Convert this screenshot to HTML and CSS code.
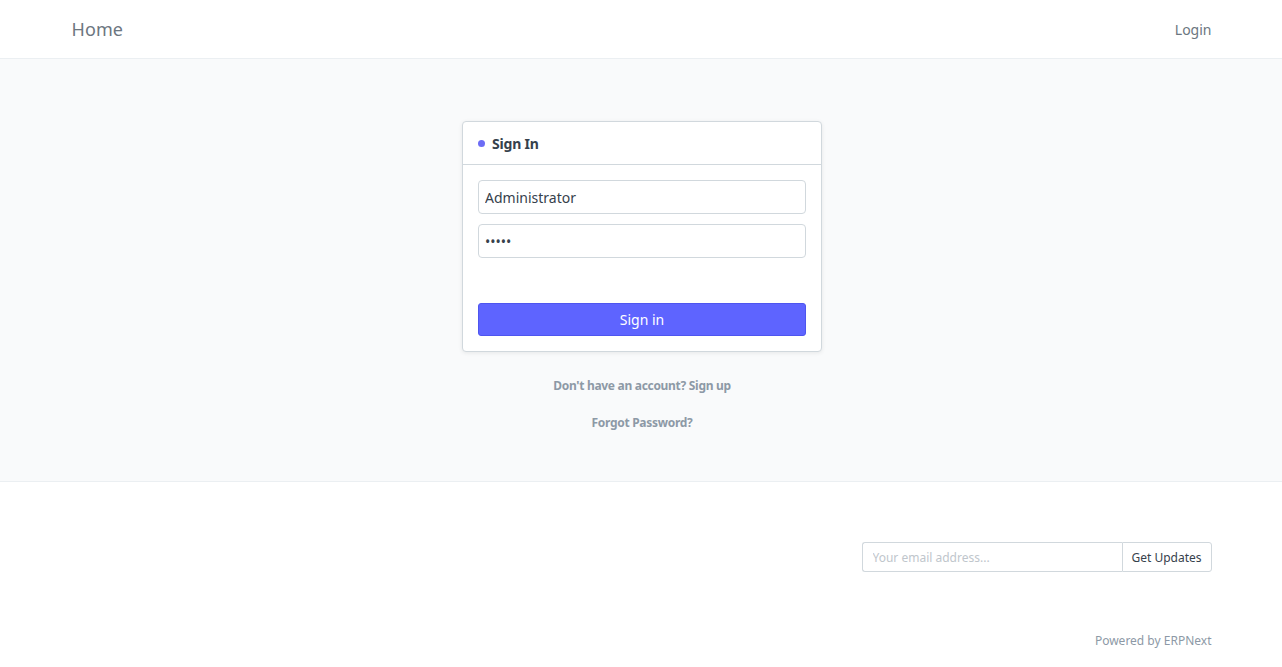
FILE: index.html
```html
<!DOCTYPE html>
<html lang="en">
<head>
    <meta charset="UTF-8">
    <title>Login</title>
    <link rel="stylesheet" href="styles.css">
</head>
<body>
    <nav class="navbar">
        <div class="container nav-inner">
            <a href="#" class="brand">Home</a>
            <a href="#" class="nav-link">Login</a>
        </div>
    </nav>

    <main class="page">
        <div class="login-card">
            <div class="card-head">
                <span class="dot"></span>
                <span class="card-title">Sign In</span>
            </div>
            <div class="card-body">
                <input type="text" class="field" value="Administrator">
                <input type="password" class="field" value="admin">
                <button class="btn-primary">Sign in</button>
            </div>
        </div>
        <p class="muted-link"><a href="#">Don't have an account? Sign up</a></p>
        <p class="muted-link"><a href="#">Forgot Password?</a></p>
    </main>

    <footer class="footer">
        <div class="container">
            <div class="subscribe">
                <input type="text" class="sub-input" placeholder="Your email address...">
                <button class="sub-btn">Get Updates</button>
            </div>
            <div class="powered">Powered by <a href="#">ERPNext</a></div>
        </div>
    </footer>
</body>
</html>
```

FILE: styles.css
```css
body {
    margin: 0;
    font-family: 'Noto Sans', 'Open Sans', sans-serif;
    color: #36414c;
    background: #fff;
}
a {
    text-decoration: none;
    color: inherit;
}
.container {
    width: 1140px;
    margin: 0 auto;
    padding-left: 1px;
}
.navbar {
    height: 58px;
    border-bottom: 1px solid #ebeff2;
}
.nav-inner {
    height: 58px;
    display: flex;
    justify-content: space-between;
    align-items: center;
}
.brand {
    font-size: 18px;
    color: #6c7680;
    letter-spacing: 0.1px;
}
.nav-link {
    font-size: 14px;
    color: #6c7680;
}
.page {
    background: #f9fafb;
    border-bottom: 1px solid #ebeff2;
    padding: 62px 0 50px 2px;
    display: flex;
    flex-direction: column;
    align-items: center;
}
.login-card {
    width: 358px;
    background: #fff;
    border: 1px solid #d1d8dd;
    border-radius: 4px;
    box-shadow: 0 1px 4px rgba(0, 0, 0, 0.08);
}
.card-head {
    height: 42px;
    border-bottom: 1px solid #d1d8dd;
    display: flex;
    align-items: center;
    padding: 0 15px;
}
.dot {
    width: 7px;
    height: 7px;
    border-radius: 50%;
    background: #6c6cf5;
    margin-right: 7px;
}
.card-title {
    font-size: 14px;
    font-weight: bold;
    color: #36414c;
    letter-spacing: -0.2px;
}
.card-body {
    padding: 15px;
    display: flex;
    flex-direction: column;
}
.field {
    height: 34px;
    box-sizing: border-box;
    border: 1px solid #d1d8dd;
    border-radius: 4px;
    padding: 0 6px;
    font-family: inherit;
    font-size: 14px;
    color: #36414c;
    margin-bottom: 10px;
}
.btn-primary {
    margin-top: 35px;
    height: 33px;
    border: 1px solid #4e55ef;
    border-radius: 3px;
    background: #5e64ff;
    color: #fff;
    font-family: inherit;
    font-size: 14px;
}
.muted-link {
    margin: 25px 0 0;
    font-size: 12px;
    font-weight: bold;
    color: #8d99a6;
    letter-spacing: -0.3px;
}
.muted-link + .muted-link {
    margin-top: 20px;
}
.footer {
    padding: 60px 0 16px;
}
.subscribe {
    display: flex;
    justify-content: flex-end;
}
.sub-input {
    width: 260px;
    height: 30px;
    box-sizing: border-box;
    border: 1px solid #d1d8dd;
    border-right: none;
    border-radius: 3px 0 0 3px;
    padding: 0 10px;
    font-family: inherit;
    font-size: 12px;
}
.sub-input::placeholder {
    color: #c0c6cc;
}
.sub-btn {
    width: 90px;
    height: 30px;
    border: 1px solid #d1d8dd;
    border-radius: 0 3px 3px 0;
    background: #fff;
    font-family: inherit;
    font-size: 12px;
    color: #36414c;
}
.powered {
    margin-top: 60px;
    text-align: right;
    font-size: 12px;
    color: #8d99a6;
}
```
